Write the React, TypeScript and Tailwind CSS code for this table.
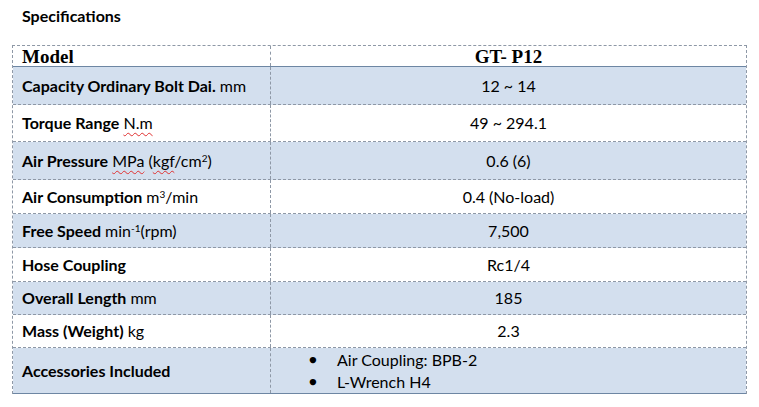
import type { ReactNode } from "react";

type Row = {
  label: ReactNode;
  value: ReactNode;
  h: string;
  blue: boolean;
};

const squiggle = "underline decoration-wavy decoration-[#e03030] decoration-1 underline-offset-[3px]";

const rows: Row[] = [
  {
    label: (
      <>
        <b>Capacity Ordinary Bolt Dai.</b> mm
      </>
    ),
    value: "12 ~ 14",
    h: "h-[38px]",
    blue: true,
  },
  {
    label: (
      <>
        <b>Torque Range</b> <span className={squiggle}>N.m</span>
      </>
    ),
    value: "49 ~ 294.1",
    h: "h-[37px]",
    blue: false,
  },
  {
    label: (
      <>
        <b>Air Pressure</b> <span className={squiggle}>MPa</span> (<span className={squiggle}>kgf</span>/cm
        <sup className="text-[10px]">2</sup>)
      </>
    ),
    value: "0.6 (6)",
    h: "h-[38px]",
    blue: true,
  },
  {
    label: (
      <>
        <b>Air Consumption</b> m<sup className="text-[10px]">3</sup>/min
      </>
    ),
    value: "0.4 (No-load)",
    h: "h-[34px]",
    blue: false,
  },
  {
    label: (
      <>
        <b>Free Speed</b> min<sup className="text-[10px]">-1</sup>(rpm)
      </>
    ),
    value: "7,500",
    h: "h-[34px]",
    blue: true,
  },
  { label: <b>Hose Coupling</b>, value: "Rc1/4", h: "h-[34px]", blue: false },
  {
    label: (
      <>
        <b>Overall Length</b> mm
      </>
    ),
    value: "185",
    h: "h-[33px]",
    blue: true,
  },
  {
    label: (
      <>
        <b>Mass (Weight)</b> kg
      </>
    ),
    value: "2.3",
    h: "h-[33px]",
    blue: false,
  },
];

export default function App() {
  return (
    <div className="w-[759px] h-[407px] bg-white text-black font-['Lato',sans-serif] text-[16px] leading-none">
      <div className="pl-[22px] pt-[8px] h-[45px] text-[16px] font-bold">Specifications</div>

      <div className="ml-[12px] w-[735px] border-x border-t border-dashed border-[#8e98a6]">
        {/* header */}
        <div className="flex h-[21px] border-b border-solid border-b-[#6d86a3]">
          <div className="w-[258px] shrink-0 border-r border-dashed border-[#8e98a6] pl-[9px] flex items-center font-['Liberation_Serif',serif] font-bold text-[19px]">
            Model
          </div>
          <div className="flex-1 flex items-center justify-center font-['Liberation_Serif',serif] font-bold text-[19px]">
            GT- P12
          </div>
        </div>

        {rows.map((r, i) => (
          <div
            key={i}
            className={`flex ${r.h} border-b border-dashed border-[#8e98a6] ${r.blue ? "bg-[#d3dfee]" : "bg-white"}`}
          >
            <div className="w-[258px] shrink-0 border-r border-dashed border-[#8e98a6] pl-[9px] flex items-center">
              <span>{r.label}</span>
            </div>
            <div className="flex-1 flex items-center justify-center">{r.value}</div>
          </div>
        ))}

        {/* accessories */}
        <div className="flex h-[46px] border-b border-solid border-b-[#6d86a3] bg-[#d3dfee]">
          <div className="w-[258px] shrink-0 border-r border-dashed border-[#8e98a6] pl-[9px] flex items-center font-bold">
            Accessories Included
          </div>
          <div className="flex-1 flex flex-col justify-center gap-[6px] pl-[38px]">
            {["Air Coupling: BPB-2", "L-Wrench H4"].map((t) => (
              <div key={t} className="flex items-center">
                <span className="w-[28px] text-[13px]">●</span>
                <span>{t}</span>
              </div>
            ))}
          </div>
        </div>
      </div>
    </div>
  );
}
